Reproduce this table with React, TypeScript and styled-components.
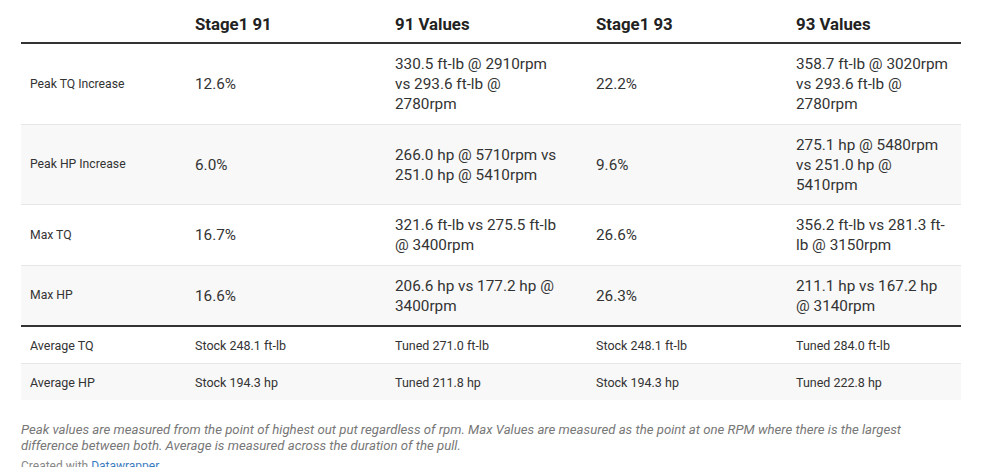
import React from "react";
import styled, { createGlobalStyle } from "styled-components";

const GlobalStyle = createGlobalStyle`
  html, body {
    margin: 0;
    padding: 0;
    background: #fff;
  }
  body {
    font-family: Roboto, "Liberation Sans", sans-serif;
    color: #333;
  }
`;

type Row = {
  label: string;
  cells: string[];
  small?: boolean;
};

const rows: Row[] = [
  {
    label: "Peak TQ Increase",
    cells: [
      "12.6%",
      "330.5 ft-lb @ 2910rpm vs 293.6 ft-lb @ 2780rpm",
      "22.2%",
      "358.7 ft-lb @ 3020rpm vs 293.6 ft-lb @ 2780rpm",
    ],
  },
  {
    label: "Peak HP Increase",
    cells: [
      "6.0%",
      "266.0 hp @ 5710rpm vs 251.0 hp @ 5410rpm",
      "9.6%",
      "275.1 hp @ 5480rpm vs 251.0 hp @ 5410rpm",
    ],
  },
  {
    label: "Max TQ",
    cells: [
      "16.7%",
      "321.6 ft-lb vs 275.5 ft-lb @ 3400rpm",
      "26.6%",
      "356.2 ft-lb vs 281.3 ft-lb @ 3150rpm",
    ],
  },
  {
    label: "Max HP",
    cells: [
      "16.6%",
      "206.6 hp vs 177.2 hp @ 3400rpm",
      "26.3%",
      "211.1 hp vs 167.2 hp @ 3140rpm",
    ],
  },
  {
    label: "Average TQ",
    cells: ["Stock 248.1 ft-lb", "Tuned 271.0 ft-lb", "Stock 248.1 ft-lb", "Tuned 284.0 ft-lb"],
    small: true,
  },
  {
    label: "Average HP",
    cells: ["Stock 194.3 hp", "Tuned 211.8 hp", "Stock 194.3 hp", "Tuned 222.8 hp"],
    small: true,
  },
];

const headers = ["Stage1 91", "91 Values", "Stage1 93", "93 Values"];
const colWidths = [165, 200, 201, 200, 174];
// right padding per value column, sets where the long values wrap
const padRight = [20, 26, 20, 10];

export default function App() {
  return (
    <>
      <GlobalStyle />
      <Page>
        <Table>
          <colgroup>
            {colWidths.map((w, i) => (
              <col key={i} style={{ width: w }} />
            ))}
          </colgroup>
          <thead>
            <tr>
              <HeadCell />
              {headers.map((h) => (
                <HeadCell key={h}>{h}</HeadCell>
              ))}
            </tr>
          </thead>
          <tbody>
            {rows.map((row, i) => (
              <BodyRow key={row.label} $striped={i % 2 === 1} $divider={i === 3}>
                <LabelCell $small={row.small}>{row.label}</LabelCell>
                {row.cells.map((c, j) => (
                  <ValueCell key={j} $small={row.small} $padRight={padRight[j]}>
                    {c}
                  </ValueCell>
                ))}
              </BodyRow>
            ))}
          </tbody>
        </Table>
        <Notes>
          Peak values are measured from the point of highest out put regardless of rpm. Max Values are measured as the
          point at one RPM where there is the largest difference between both. Average is measured across the duration
          of the pull.
        </Notes>
        <Credit>
          Created with <CreditLink>Datawrapper</CreditLink>
        </Credit>
      </Page>
    </>
  );
}

const Page = styled.div`
  padding: 0 28px 0 21px;
  width: 989px;
  box-sizing: border-box;
`;

const Table = styled.table`
  width: 940px;
  border-collapse: collapse;
  table-layout: fixed;
`;

const HeadCell = styled.th`
  text-align: left;
  font-weight: 700;
  font-size: 16.8px;
  color: #222;
  padding: 15px 9px 8px;
  line-height: 19px;
  border-bottom: 2px solid #333;
`;

const BodyRow = styled.tr<{ $striped: boolean; $divider: boolean }>`
  background: ${(p) => (p.$striped ? "#f8f8f8" : "#fff")};
  border-bottom: ${(p) => (p.$divider ? "2px solid #333" : "1px solid #e6e6e6")};
  &:last-child {
    border-bottom: none;
  }
`;

const LabelCell = styled.td<{ $small?: boolean }>`
  font-size: ${(p) => (p.$small ? "12.5px" : "12.2px")};
  color: #333;
  padding: ${(p) => (p.$small ? "10px 9px 9px" : "10px 9px 9.5px")};
  line-height: 17px;
  vertical-align: middle;
`;

const ValueCell = styled.td<{ $small?: boolean; $padRight: number }>`
  font-size: ${(p) => (p.$small ? "12.5px" : "15.3px")};
  line-height: ${(p) => (p.$small ? "17px" : "20px")};
  color: #333;
  padding: ${(p) => (p.$small ? "10px" : "10px")} ${(p) => p.$padRight}px ${(p) => (p.$small ? "9px" : "9.5px")} 9px;
  vertical-align: middle;
`;

const Notes = styled.p`
  margin: 22px 0 0;
  font-size: 13.2px;
  line-height: 16px;
  font-style: italic;
  color: #777;
  width: 930px;
`;

const Credit = styled.div`
  margin-top: 5px;
  font-size: 12px;
  color: #888;
  line-height: 15px;
`;

const CreditLink = styled.span`
  color: #3a7bbf;
`;
